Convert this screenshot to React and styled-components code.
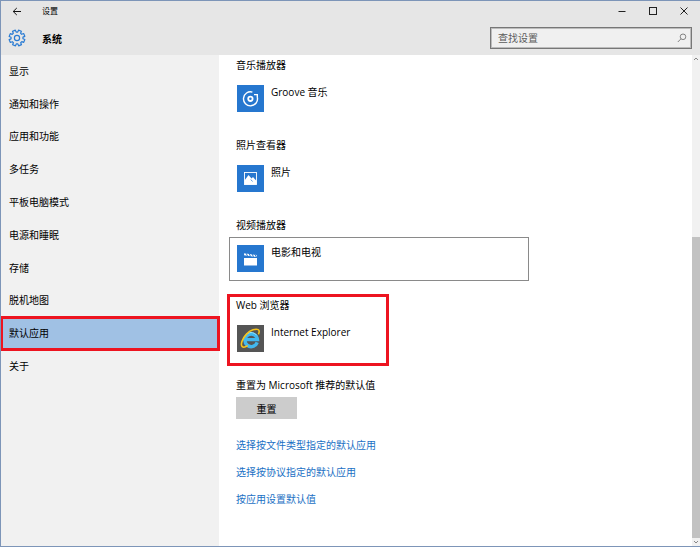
import React from "react";
import styled, { createGlobalStyle, css } from "styled-components";

const Global = createGlobalStyle`
  *, *::before, *::after { box-sizing: border-box; }
  body { margin: 0; background: #fff; }
  body, button, input {
    font-family: "Open Sans", "Noto Sans CJK SC", sans-serif;
    font-size: 10px;
    color: #000;
  }
  button { border: 0; padding: 0; background: none; }
  h1, h2, p, ul { margin: 0; padding: 0; font: inherit; list-style: none; }
  svg { display: block; }
`;

const Window = styled.div`
  display: flex;
  flex-direction: column;
  height: 100vh;
  min-height: 520px;
  overflow: hidden;
  border: solid #7d95b8;
  border-width: 1px 0 1px 1px;
`;

const Header = styled.header`
  background: #e6e6e6;
`;

const TitleBar = styled.div`
  display: flex;
  align-items: center;
  height: 20px;
  padding-right: 1px;
`;

const BackButton = styled.button`
  width: 32px;
  height: 20px;
  display: grid;
  place-items: center;
`;

const WindowTitle = styled.p`
  flex: 1;
  padding-left: 9px;
  font-size: 8px;
  line-height: 20px;
`;

const CaptionButton = styled.button`
  width: 31px;
  height: 20px;
  display: grid;
  place-items: center;
`;

const PageBar = styled.div`
  display: flex;
  align-items: center;
  height: 34px;
  padding: 0 8px 0 7px;
`;

const PageTitle = styled.h1`
  flex: 1;
  padding-left: 16px;
  font-weight: 700;
`;

const SearchBox = styled.label`
  display: flex;
  align-items: center;
  width: 202px;
  height: 22px;
  padding: 0 4px 0 7px;
  border: 1px solid #777;
  outline: 1px solid #bcbcbc;
  outline-offset: -2px;
  background: #f0f0f0;
`;

const SearchInput = styled.input`
  flex: 1;
  min-width: 0;
  padding: 0;
  border: 0;
  outline: 0;
  background: transparent;
  &::placeholder { color: #5c5c5c; opacity: 1; }
`;

const Body = styled.div`
  flex: 1;
  min-height: 0;
  display: flex;
`;

const Sidebar = styled.nav`
  width: 218px;
  flex: none;
  background: #f1f1f1;
`;

const NavList = styled.ul`
  display: grid;
  grid-template-rows: repeat(10, 1fr);
  height: 328px;
`;

const highlight = css`
  &::after {
    content: "";
    position: absolute;
    inset: ${(p) => p.$inset};
    border: 3px solid #ed1420;
    pointer-events: none;
  }
`;

const NavItem = styled.li`
  position: relative;
  display: grid;
  ${(p) => p.$active && highlight}
`;

const NavLink = styled.a`
  display: flex;
  align-items: center;
  padding: 0 8px 2px;
  color: #000;
  text-decoration: none;
  background: ${(p) => (p.$active ? "#a0c1e4" : "transparent")};
`;

const Main = styled.main`
  flex: 1;
  min-width: 0;
  padding: 0 8px;
`;

const Section = styled.section`
  position: relative;
  width: fit-content;
  height: 80px;
  ${(p) => p.$marked && highlight}
`;

const Heading = styled.h2`
  padding-left: 9px;
  line-height: 20px;
`;

const AppButton = styled.button`
  display: flex;
  align-items: flex-start;
  gap: 7px;
  width: ${(p) => (p.$wide ? "300px" : "150px")};
  height: 44px;
  margin: 2px 0 0 2px;
  padding: 7px;
  border: 1px solid ${(p) => (p.$wide ? "#8a8a8a" : "transparent")};
  line-height: 14px;
  text-align: left;
`;

const Tile = styled.span`
  flex: none;
  width: 27px;
  height: 27px;
  background: ${(p) => p.$color};
`;

const ResetButton = styled.button`
  width: 61px;
  height: 22px;
  margin: 2px 0 0 9px;
  background: #ccc;
`;

const Links = styled.ul`
  padding: 13px 0 0 9px;
`;

const TextLink = styled.a`
  line-height: 27px;
  color: #1a6fc4;
  text-decoration: none;
`;

const Scrollbar = styled.div`
  flex: none;
  display: flex;
  flex-direction: column;
  width: 8px;
  background: #f1f1f1;
`;

const ScrollArrow = styled.button`
  height: 8px;
  display: grid;
  place-items: center;
`;

const ScrollGap = styled.div`
  flex: 174;
`;

const ScrollThumb = styled.div`
  flex: 301;
  background: #c2c2c2;
`;

const GearIcon = () => {
  const points = [];
  for (let i = 0; i < 8; i++) {
    [[-15, 6], [-11, 8], [11, 8], [15, 6]].forEach(([offset, r]) => {
      const a = ((i * 45 + 22 + offset) * Math.PI) / 180;
      points.push(`${9 + r * Math.cos(a)},${9 + r * Math.sin(a)}`);
    });
  }
  return (
    <svg width="18" height="18" viewBox="0 0 18 18" fill="none" stroke="#2b7cd3" aria-hidden="true">
      <polygon points={points.join(" ")} strokeWidth="1.2" strokeLinejoin="round" />
      <circle cx="9" cy="9" r="2.6" strokeWidth="1.2" />
    </svg>
  );
};

const MusicIcon = () => (
  <svg width="27" height="27" viewBox="0 0 27 27" fill="none" stroke="#fff" aria-hidden="true">
    <path d="M15.4 7.1A7 7 0 1 0 20.3 12.2" strokeWidth="1.4" />
    <path d="M17 9.6h3.3v2.6" strokeWidth="1.4" />
    <circle cx="13.4" cy="13.8" r="2.2" strokeWidth="1.8" />
  </svg>
);

const PhotoIcon = () => (
  <svg width="27" height="27" viewBox="0 0 27 27" aria-hidden="true">
    <rect x="7.5" y="7.5" width="12" height="12" fill="none" stroke="#fff" strokeWidth=".9" />
    <path d="M7.5 15.5 11.5 10l3 3.6 1.5-1.7 3.5 4.2v3.4h-12z" fill="#fff" />
    <path d="m13.8 14.5 1.7 2" stroke="#2b7cd3" strokeWidth=".8" />
  </svg>
);

const MovieIcon = () => (
  <svg width="27" height="27" viewBox="0 0 27 27" aria-hidden="true">
    <path d="M7 13h13v7.5H7z" fill="#fff" />
    <path d="m7.2 8.2 12.6 1.8-.3 2L7 10.2z" fill="#fff" />
    <path d="m9 8 1.5 3M12 8.4l1.5 3M15 8.8l1.5 3M18 9.3l1.2 2.6" stroke="#2b7cd3" strokeWidth="1" />
  </svg>
);

const ExplorerIcon = () => (
  <svg width="27" height="27" viewBox="0 0 27 27" fill="none" aria-hidden="true">
    <path
      d="M20.2 17.4A6.3 6.3 0 1 1 20.5 14.6H9"
      stroke="#42b8ef"
      strokeWidth="3.4"
    />
    <path d="M8.4 10.6A7 7 0 0 1 19.8 10.4" stroke="#9be6ff" strokeWidth="1" />
    <path
      d="M21.4 9.4c1-2.3 1-4.2-.2-4.8-2.3-1.1-7.700.3-11.7 4.500-4.500 4.600-6.200 10.700-4.300 12.500 1.200 1.100 3.600.3 5.600-1"
      stroke="#f8c51c"
      strokeWidth="1.600"
    />
  </svg>
);

const navItems = [
  "显示", "通知和操作", "应用和功能", "多任务", "平板电脑模式",
  "电源和睡眠", "存储", "脱机地图", "默认应用", "关于",
];

const apps = [
  { heading: "音乐播放器", name: "Groove 音乐", Icon: MusicIcon, color: "#2677cf" },
  { heading: "照片查看器", name: "照片", Icon: PhotoIcon, color: "#2677cf" },
  { heading: "视频播放器", name: "电影和电视", Icon: MovieIcon, color: "#2677cf", wide: true },
  { heading: "Web 浏览器", name: "Internet Explorer", Icon: ExplorerIcon, color: "#555", marked: true },
];

const links = ["选择按文件类型指定的默认应用", "选择按协议指定的默认应用", "按应用设置默认值"];

export default function App() {
  return (
    <>
      <Global />
      <Window>
        <Header>
          <TitleBar>
            <BackButton aria-label="返回">
              <svg width="10" height="9" viewBox="0 0 10 9" fill="none" stroke="#111">
                <path d="M9 4.5H1.2M4.8 1 1.2 4.5 4.8 8" />
              </svg>
            </BackButton>
            <WindowTitle>设置</WindowTitle>
            <CaptionButton aria-label="最小化">
              <svg width="8" height="8" viewBox="0 0 8 8" stroke="#222"><path d="M.5 4.5h7" /></svg>
            </CaptionButton>
            <CaptionButton aria-label="最大化">
              <svg width="8" height="8" viewBox="0 0 8 8" fill="none" stroke="#222"><rect x=".5" y=".5" width="7" height="7" /></svg>
            </CaptionButton>
            <CaptionButton aria-label="关闭">
              <svg width="8" height="8" viewBox="0 0 8 8" stroke="#222"><path d="m.5.5 7 7m0-7-7 7" /></svg>
            </CaptionButton>
          </TitleBar>
          <PageBar>
            <GearIcon />
            <PageTitle>系统</PageTitle>
            <SearchBox>
              <SearchInput type="text" placeholder="查找设置" aria-label="查找设置" />
              <svg width="10" height="10" viewBox="0 0 10 10" fill="none" stroke="#777" aria-hidden="true">
                <circle cx="6" cy="3.8" r="2.8" strokeWidth=".9" />
                <path d="M4 5.8.8 9" strokeWidth=".9" />
              </svg>
            </SearchBox>
          </PageBar>
        </Header>
        <Body>
          <Sidebar>
            <NavList>
              {navItems.map((label) => {
                const active = label === "默认应用";
                return (
                  <NavItem key={label} $active={active} $inset="-1px">
                    <NavLink href="#" $active={active} aria-current={active ? "page" : undefined}>
                      {label}
                    </NavLink>
                  </NavItem>
                );
              })}
            </NavList>
          </Sidebar>
          <Main>
            {apps.map(({ heading, name, Icon, color, wide, marked }) => (
              <Section key={name} $marked={marked} $inset="-1px -10px 9px 0">
                <Heading>{heading}</Heading>
                <AppButton $wide={wide}>
                  <Tile $color={color}><Icon /></Tile>
                  {name}
                </AppButton>
              </Section>
            ))}
            <Heading>重置为 Microsoft 推荐的默认值</Heading>
            <ResetButton>重置</ResetButton>
            <Links>
              {links.map((label) => (
                <li key={label}><TextLink href="#">{label}</TextLink></li>
              ))}
            </Links>
          </Main>
          <Scrollbar>
            <ScrollArrow aria-label="向上滚动">
              <svg width="6" height="4" viewBox="0 0 6 4" fill="none" stroke="#888"><path d="m1 3 2-2 2 2" /></svg>
            </ScrollArrow>
            <ScrollGap />
            <ScrollThumb />
            <ScrollArrow aria-label="向下滚动">
              <svg width="6" height="4" viewBox="0 0 6 4" fill="none" stroke="#888"><path d="m1 1 2 2 2-2" /></svg>
            </ScrollArrow>
          </Scrollbar>
        </Body>
      </Window>
    </>
  );
}
